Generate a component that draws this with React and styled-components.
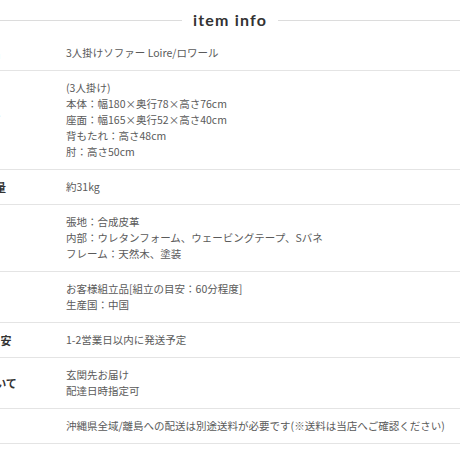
import React from "react";
import styled, { createGlobalStyle } from "styled-components";

const Global = createGlobalStyle`
  html, body { margin: 0; padding: 0; background: #fff; }
  body { overflow: hidden; font-family: "Noto Sans CJK JP", "Noto Sans", sans-serif; }
`;

const Page = styled.div`
  width: 460px;
  height: 460px;
  overflow: hidden;
`;

const Heading = styled.div`
  display: flex;
  align-items: center;
  gap: 11px;
  height: 32px;
  padding-top: 4px;
`;

const Rule = styled.span`
  flex: 1;
  height: 1px;
  background: #dcdcdc;
`;

const Title = styled.h2`
  margin: 0;
  font-family: Lato, "Open Sans", sans-serif;
  font-weight: 700;
  font-size: 16px;
  letter-spacing: 1.2px;
  color: #333;
  line-height: 1;
`;

const Table = styled.div`
  margin-left: -66px;
  width: calc(100% + 66px);
`;

const Row = styled.div`
  display: grid;
  grid-template-columns: 100px 1fr;
  align-items: center;
  padding: 9px 0;
  border-bottom: 1px solid #e4e4e4;
`;

const Label = styled.div`
  text-align: center;
  font-size: 11px;
  font-weight: 700;
  line-height: 16px;
  height: 16px;
  color: #333;
  white-space: nowrap;
`;

const Value = styled.div`
  padding-left: 32px;
  font-size: 10.5px;
  color: #5a5a5a;
  white-space: nowrap;
`;

const Line = styled.div`
  height: 16px;
  line-height: 16px;
  overflow: visible;
`;

const rows = [
  ["商品名", ["3人掛けソファー Loire/ロワール"]],
  [
    "サイズ",
    [
      "(3人掛け)",
      "本体：幅180×奥行78×高さ76cm",
      "座面：幅165×奥行52×高さ40cm",
      "背もたれ：高さ48cm",
      "肘：高さ50cm",
    ],
  ],
  ["商品重量", ["約31kg"]],
  ["素材", ["張地：合成皮革", "内部：ウレタンフォーム、ウェービングテープ、Sバネ", "フレーム：天然木、塗装"]],
  ["仕様", ["お客様組立品[組立の目安：60分程度]", "生産国：中国"]],
  ["お届け目安", ["1-2営業日以内に発送予定"]],
  ["配送について", ["玄関先お届け", "配達日時指定可"]],
  ["備考", ["沖縄県全域/離島への配送は別途送料が必要です(※送料は当店へご確認ください)"]],
];

export default function App() {
  return (
    <Page>
      <Global />
      <Heading>
        <Rule />
        <Title>item info</Title>
        <Rule />
      </Heading>
      <Table>
        {rows.map(([label, lines]) => (
          <Row key={label}>
            <Label>{label}</Label>
            <Value>
              {lines.map((l) => (
                <Line key={l}>{l}</Line>
              ))}
            </Value>
          </Row>
        ))}
      </Table>
    </Page>
  );
}
